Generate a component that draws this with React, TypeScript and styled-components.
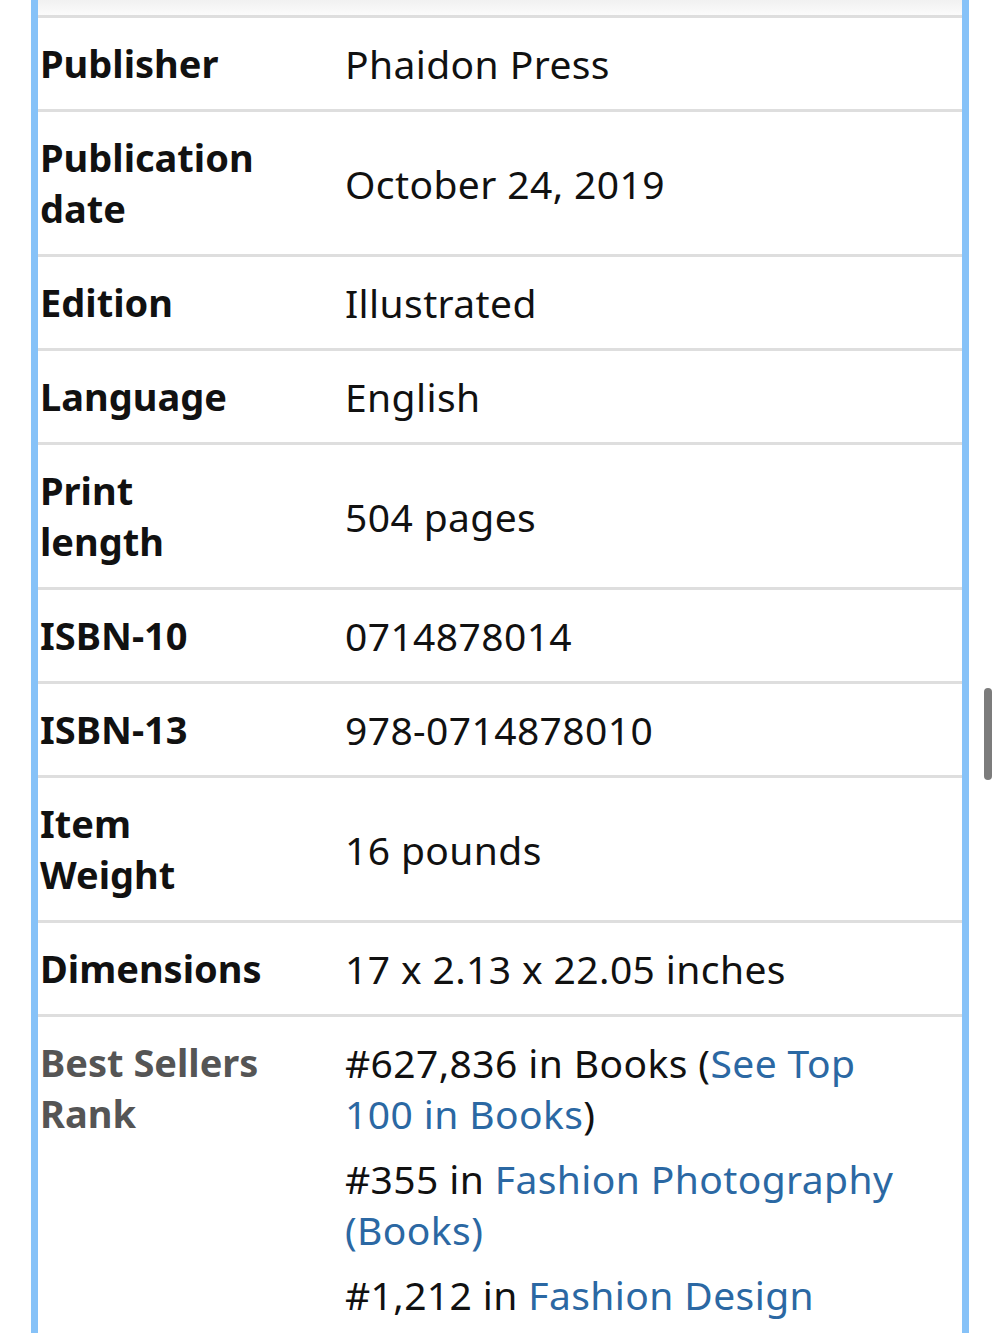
import React from "react";
import styled, { createGlobalStyle } from "styled-components";

const Global = createGlobalStyle`
  html, body { margin: 0; padding: 0; background: #fff; }
  body { font-family: "Noto Sans", "Open Sans", sans-serif; color: #111; }
`;

const Page = styled.div`
  width: 1000px;
  height: 1333px;
  overflow: hidden;
  position: relative;
  background: #fff;
`;

const Frame = styled.div`
  margin-left: 31px;
  width: 924px;
  border-left: 7px solid #86c2f8;
  border-right: 7px solid #86c2f8;
`;

const TopStrip = styled.div`
  height: 15px;
  background: linear-gradient(#f1f1f1, #fbfbfb);
  border-bottom: 3px solid #dedede;
`;

const Row = styled.div`
  display: grid;
  grid-template-columns: 306px 1fr;
  padding: 20px 0;
  border-bottom: 3px solid #dedede;
  line-height: 51px;
`;

const Label = styled.div<{ $muted?: boolean }>`
  padding-left: 2px;
  font-size: 38px;
  font-weight: 700;
  color: ${(p) => (p.$muted ? "#555" : "#111")};
  align-self: ${(p) => (p.$muted ? "start" : "center")};
`;

const Value = styled.div`
  align-self: center;
  padding-left: 1px;
  padding-right: 48px;
  font-size: 39px;
  letter-spacing: 0.4px;
  color: #111;
`;

const RankList = styled.ul`
  list-style: none;
  margin: 0;
  padding: 0 48px 0 1px;
  font-size: 39px;
  letter-spacing: 0.4px;
  display: flex;
  flex-direction: column;
  gap: 14px;
`;

const Link = styled.span`
  color: #2b68a3;
`;

const Scroll = styled.div`
  position: absolute;
  left: 984px;
  top: 688px;
  width: 8px;
  height: 92px;
  border-radius: 4px;
  background: #7c7c7c;
`;

const rows: [React.ReactNode, string][] = [
  ["Publisher", "Phaidon Press"],
  [
    <>
      Publication
      <br />
      date
    </>,
    "October 24, 2019",
  ],
  ["Edition", "Illustrated"],
  ["Language", "English"],
  [
    <>
      Print
      <br />
      length
    </>,
    "504 pages",
  ],
  ["ISBN-10", "0714878014"],
  ["ISBN-13", "978-0714878010"],
  [
    <>
      Item
      <br />
      Weight
    </>,
    "16 pounds",
  ],
  ["Dimensions", "17 x 2.13 x 22.05 inches"],
];

export default function App() {
  return (
    <Page>
      <Global />
      <Frame>
        <TopStrip />
        {rows.map(([k, v]) => (
          <Row key={v}>
            <Label>{k}</Label>
            <Value>{v}</Value>
          </Row>
        ))}
        <Row>
          <Label $muted>
            Best Sellers
            <br />
            Rank
          </Label>
          <RankList>
            <li>
              #627,836 in Books (<Link>See Top 100 in Books</Link>)
            </li>
            <li>
              #355 in <Link>Fashion Photography (Books)</Link>
            </li>
            <li>
              #1,212 in <Link>Fashion Design</Link>
            </li>
          </RankList>
        </Row>
      </Frame>
      <Scroll />
    </Page>
  );
}
